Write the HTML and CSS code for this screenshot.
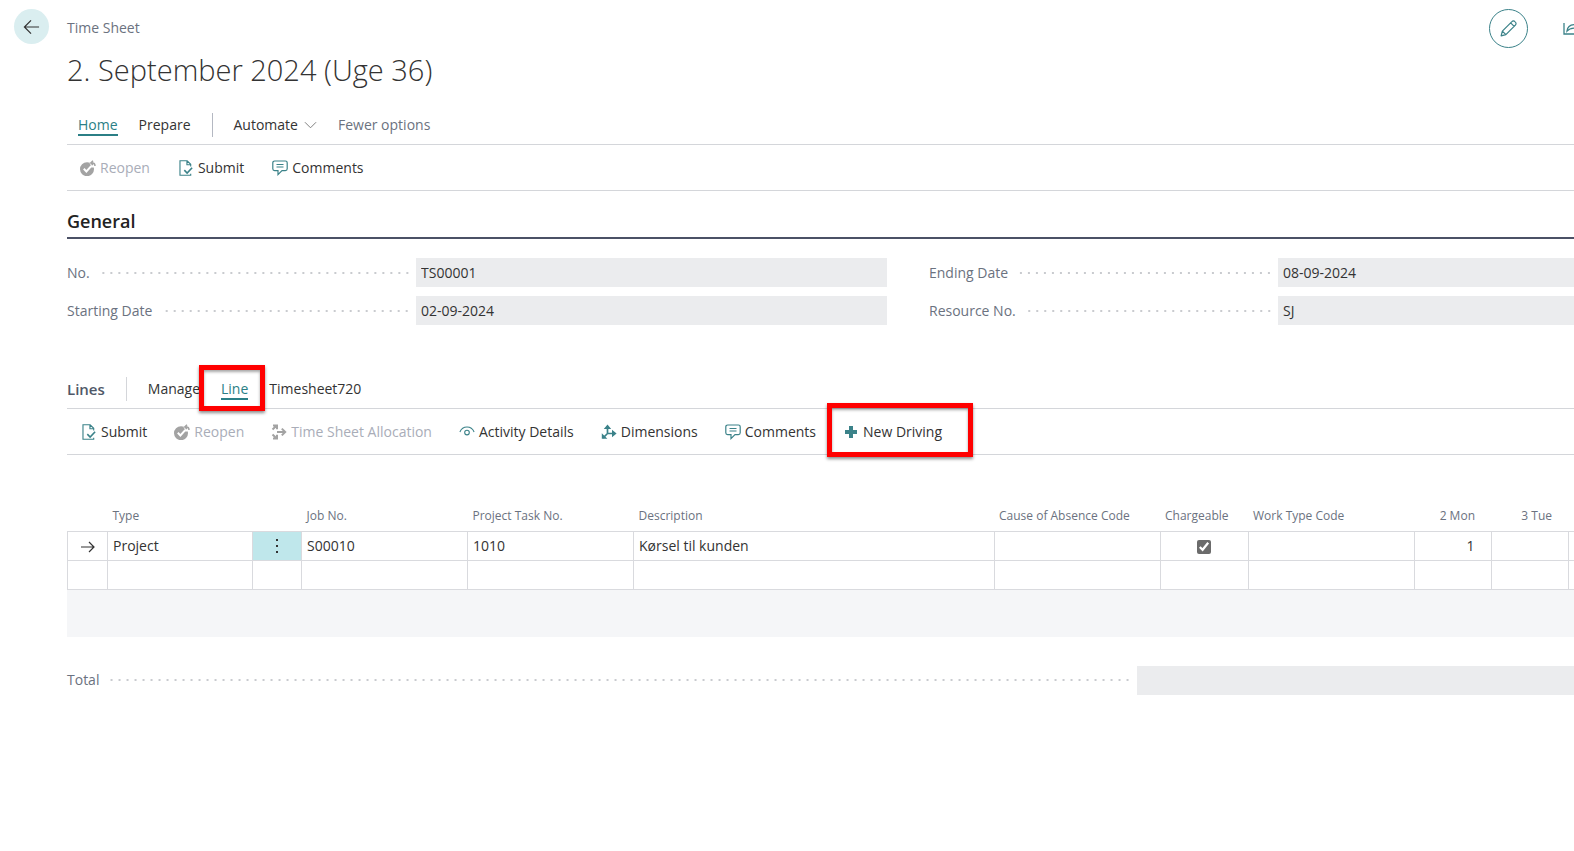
FILE: index.html
```html
<!DOCTYPE html>
<html lang="en">
<head>
<meta charset="utf-8">
<title>Time Sheet</title>
<link rel="stylesheet" href="styles.css">
</head>
<body>
<svg class="defs" aria-hidden="true">
  <symbol id="i-reopen" viewBox="0 0 16 16">
    <path fill="currentColor" d="M7 2.200A7 7 0 1 0 14 9l-.2-1.400h-2.600V5.400L9.600 3.600 10 2.800A7 7 0 0 0 7 2.200z"/>
    <path fill="none" stroke="#fff" stroke-width="2" d="M3.800 8.800l2.600 2.700 5-5.600"/>
    <path fill="none" stroke="currentColor" stroke-width="1.500" d="M13 .8l-2.200 2.100L13 5M11 2.900h1.600c1.600 0 2.400 1 2.400 3.100"/>
  </symbol>
  <symbol id="i-submit" viewBox="0 0 16 17">
    <path fill="none" stroke="currentColor" stroke-width="1.200" d="M13 7V4.600L9.200.8H1.600V16.200H13V14.500M9 .8V5h4"/>
    <path fill="none" stroke="currentColor" stroke-width="1.700" d="M6.200 10.800l3 3 5.300-5.600"/>
  </symbol>
  <symbol id="i-comments" viewBox="0 0 16 16">
    <path fill="none" stroke="currentColor" stroke-width="1.200" d="M2.600 1h10.800a1.800 1.800 0 0 1 1.800 1.800v6a1.800 1.800 0 0 1-1.800 1.800H10l-4 4v-4H2.600A1.800 1.800 0 0 1 .8 8.800v-6A1.800 1.800 0 0 1 2.600 1zM4.500 4.500h7M4.500 7h7"/>
  </symbol>
  <symbol id="i-alloc" viewBox="0 0 16 16">
    <path fill="none" stroke="currentColor" stroke-width="2" d="M1.500 5.500L5.500 1.800M2 1.400h4v3.800M1.500 10.500l4 3.800M2 14.600h4v-3.800M6 8h8M10.800 4.600L14.200 8l-3.400 3.400"/>
  </symbol>
  <symbol id="i-eye" viewBox="0 0 18 16">
    <path fill="none" stroke="currentColor" stroke-width="1.200" d="M1 8C2.600 4.200 5.600 2.400 9 2.400S15.400 4.200 17 8"/>
    <circle cx="9" cy="8.600" r="2.600" fill="none" stroke="currentColor" stroke-width="1.200"/>
  </symbol>
  <symbol id="i-dims" viewBox="0 0 16 16">
    <path fill="none" stroke="currentColor" stroke-width="1.700" d="M6.500 2v7.500H13M6.500 9.500L2 14"/>
    <path fill="currentColor" d="M2.800 5L6.500.6 10.200 5zM11 5.800l4.600 3.700-4.600 3.700zM.8 9.200v5.600h5.600z"/>
  </symbol>
  <symbol id="i-plus" viewBox="0 0 16 16">
    <path fill="currentColor" d="M6 2h4v4h4v4h-4v4H6v-4H2V6h4z"/>
  </symbol>
</svg>

<header class="top">
  <button class="back" type="button" aria-label="Back">
    <svg class="back-icon" viewBox="0 0 18 16"><path fill="none" stroke="currentColor" stroke-width="1.300" d="M17 8H1.500M8.500 1L1.500 8l7 7"/></svg>
  </button>
  <div class="heading">
    <p class="kind">Time Sheet</p>
    <h1 class="title">2. September 2024 (Uge 36)</h1>
  </div>
  <button class="edit" type="button" aria-label="Edit">
    <svg class="edit-icon" viewBox="0 0 18 18"><path fill="none" stroke="currentColor" stroke-width="1.300" stroke-linejoin="round" d="M1.200 16.800l1.300-5L12.600 1.700a2.200 2.200 0 0 1 3.200 0l.5.500a2.200 2.200 0 0 1 0 3.200L6.200 15.500zM2.500 11.800l3.700 3.700M11.300 3l3.700 3.700"/></svg>
  </button>
  <button class="share" type="button" aria-label="Share">
    <svg class="share-icon" viewBox="0 0 20 16"><path fill="none" stroke="currentColor" stroke-width="1.300" d="M1 3v11h15V11M4 11c.4-4 3-6.400 8-6.400V1.500L18 6.500l-6 4.700V8C8.500 8 6 8.800 4 11z"/></svg>
  </button>
</header>

<main class="page">
  <nav class="tabs" aria-label="Page actions">
    <button class="tab active" type="button">Home</button>
    <button class="tab" type="button">Prepare</button>
    <span class="divider"></span>
    <button class="tab" type="button">Automate<svg class="chevron" viewBox="0 0 14 8"><path fill="none" stroke="currentColor" d="M1 1l6 6 6-6"/></svg></button>
    <button class="tab muted" type="button">Fewer options</button>
  </nav>
  <div class="actions">
    <button class="action" type="button" disabled><svg class="icon"><use href="#i-reopen"/></svg>Reopen</button>
    <button class="action" type="button"><svg class="icon"><use href="#i-submit"/></svg>Submit</button>
    <button class="action" type="button"><svg class="icon"><use href="#i-comments"/></svg>Comments</button>
  </div>

  <section>
    <h2 class="section-title">General</h2>
    <div class="fields">
      <div class="field"><label class="label" for="no">No.</label><input class="value" id="no" value="TS00001" readonly></div>
      <div class="field"><label class="label" for="end">Ending Date</label><input class="value" id="end" value="08-09-2024" readonly></div>
      <div class="field"><label class="label" for="start">Starting Date</label><input class="value" id="start" value="02-09-2024" readonly></div>
      <div class="field"><label class="label" for="res">Resource No.</label><input class="value" id="res" value="SJ" readonly></div>
    </div>
  </section>

  <section class="lines">
    <div class="tabs line-tabs">
      <h2 class="lines-title">Lines</h2>
      <span class="divider pale"></span>
      <button class="tab" type="button">Manage</button>
      <button class="tab active marked" type="button">Line<span class="mark"></span></button>
      <button class="tab" type="button">Timesheet720</button>
    </div>
    <div class="actions line-actions">
      <button class="action" type="button"><svg class="icon"><use href="#i-submit"/></svg>Submit</button>
      <button class="action" type="button" disabled><svg class="icon"><use href="#i-reopen"/></svg>Reopen</button>
      <button class="action" type="button" disabled><svg class="icon"><use href="#i-alloc"/></svg>Time Sheet Allocation</button>
      <button class="action" type="button"><svg class="icon"><use href="#i-eye"/></svg>Activity Details</button>
      <button class="action" type="button"><svg class="icon"><use href="#i-dims"/></svg>Dimensions</button>
      <button class="action" type="button"><svg class="icon"><use href="#i-comments"/></svg>Comments</button>
      <button class="action marked" type="button"><svg class="icon"><use href="#i-plus"/></svg>New Driving<span class="mark wide"></span></button>
    </div>

    <div class="grid-area">
      <table class="grid">
        <colgroup><col class="c-sel"><col class="c-type"><col class="c-menu"><col class="c-code"><col class="c-code"><col><col class="c-code"><col class="c-check"><col class="c-code"><col class="c-day"><col class="c-day"><col class="c-edge"></colgroup>
        <thead>
          <tr><th></th><th>Type</th><th></th><th>Job No.</th><th>Project Task No.</th><th>Description</th><th>Cause of Absence Code</th><th>Chargeable</th><th>Work Type Code</th><th class="num">2 Mon</th><th class="num">3 Tue</th><th></th></tr>
        </thead>
        <tbody>
          <tr>
            <td class="center"><svg class="row-arrow" viewBox="0 0 14 12"><path fill="none" stroke="currentColor" stroke-width="1.200" d="M0 6h13M8 1l5 5-5 5"/></svg></td>
            <td>Project</td>
            <td class="center menu-cell"><button class="menu" type="button" aria-label="Row options"><svg class="dots" viewBox="0 0 4 16"><path fill="currentColor" d="M1 1h2v2H1zM1 7h2v2H1zM1 13h2v2H1z"/></svg></button></td>
            <td>S00010</td><td>1010</td><td>Kørsel til kunden</td><td></td>
            <td class="center"><input class="check" type="checkbox" aria-label="Chargeable" checked></td>
            <td></td><td class="num">1</td><td></td><td></td>
          </tr>
          <tr><td></td><td></td><td></td><td></td><td></td><td></td><td></td><td></td><td></td><td></td><td></td><td></td></tr>
        </tbody>
      </table>
    </div>

    <div class="field total"><label class="label" for="total">Total</label><input class="value" id="total" readonly></div>
  </section>
</main>
</body>
</html>
```
FILE: styles.css
```css
* { box-sizing: border-box; }

body {
  margin: 0;
  background: #fff;
  color: #333;
  font: 14px/20px "Open Sans", "Noto Sans", sans-serif;
  overflow-x: hidden;
}

button {
  display: inline-flex;
  align-items: center;
  padding: 0;
  border: 0;
  background: none;
  color: inherit;
  font: inherit;
  white-space: nowrap;
}

.defs { display: none; }

.top {
  display: flex;
  align-items: flex-start;
  padding: 9px 0 0 14px;
  height: 106px;
  overflow: hidden;
}

.back {
  width: 35px;
  height: 35px;
  justify-content: center;
  border-radius: 50%;
  background: #daeef0;
}

.back-icon { width: 17px; height: 16px; }

.heading {
  flex: 1;
  padding: 9px 0 0 18px;
}

.kind { margin: 0; color: #6b7280; }

.title {
  margin: 12px 0 0;
  font-size: 29px;
  line-height: 40px;
  font-weight: 300;
}

.edit {
  width: 39px;
  height: 39px;
  justify-content: center;
  border: 1px solid #3b8289;
  border-radius: 50%;
  color: #3b8289;
}

.edit-icon { width: 17px; height: 17px; }

.share {
  width: 11px;
  margin: 11px 0 0 35px;
  color: #3b8289;
}

.share-icon { flex: none; width: 20px; height: 16px; }

.page { padding-left: 67px; }

.tabs {
  display: flex;
  align-items: center;
  gap: 21px;
  height: 39px;
  padding-left: 11px;
  border-bottom: 1px solid #d4d6da;
}

.tab { height: 22px; padding-top: 2px; border-bottom: 2px solid transparent; }
.tab.active { color: #2b7f86; border-color: #2b7f86; }
.tab.muted { color: #6b7280; }

.chevron { width: 13px; height: 8px; margin-left: 6px; color: #777; }

.divider { width: 1px; height: 24px; background: #b4b8c2; }
.divider.pale { background: #d4d6da; }

.actions {
  display: flex;
  align-items: center;
  gap: 28px;
  height: 46px;
  padding-left: 13px;
  border-bottom: 1px solid #d4d6da;
}

.line-actions { gap: 27px; padding-left: 14px; }

.action { gap: 4px; }
.action:disabled { color: #a9adb8; }
.action:disabled .icon { color: #a3a3a3; }

.icon { width: 16px; height: 16px; color: #3b8289; }

.section-title {
  margin: 0;
  padding: 18px 0 4px;
  border-bottom: 2px solid #4b5166;
  color: #222;
  font-size: 18px;
  line-height: 24px;
  font-weight: 600;
}

.fields {
  display: grid;
  grid-template-columns: 820fr 645fr;
  gap: 9px 42px;
  padding-top: 19px;
}

.field { display: flex; align-items: center; }

.label {
  display: flex;
  flex: none;
  align-items: center;
  gap: 8px;
  width: 349px;
  padding-right: 6px;
  color: #6b7280;
}

.label::after {
  content: "";
  flex: 1;
  height: 2px;
  background: radial-gradient(circle at 5px 1px, #c9cbcf 1px, transparent 1px) right / 8px 2px repeat-x;
}

.value {
  flex: 1;
  min-width: 0;
  height: 29px;
  padding: 0 5px;
  border: 0;
  background: #ebecee;
  color: #333;
  font: inherit;
}

.lines { padding-top: 45px; }

.line-tabs { padding-left: 0; }

.lines-title {
  margin: 0;
  color: #505868;
  font-size: 15px;
  line-height: 20px;
  font-weight: 600;
}

.marked { position: relative; }

.mark {
  position: absolute;
  top: -13px;
  left: -22px;
  width: 66px;
  height: 46px;
  border: 5px solid #f00;
  box-shadow: 0 2px 3px rgba(0, 0, 0, .45), inset 0 2px 3px rgba(0, 0, 0, .35);
}

.mark.wide {
  top: -19px;
  left: -16px;
  width: 146px;
  height: 54px;
}

.grid-area {
  margin-top: 50px;
  padding-bottom: 47px;
  background: linear-gradient(#fff, #fff) top / 100% 28px no-repeat #f5f6f8;
}

.grid {
  width: 100%;
  table-layout: fixed;
  border-collapse: collapse;
  background: #fff;
}

.c-sel { width: 40px; }
.c-type { width: 145px; }
.c-menu { width: 49px; }
.c-code { width: 166px; }
.c-check { width: 88px; }
.c-day { width: 77px; }
.c-edge { width: 6px; }

.grid th, .grid td {
  padding: 0 5px;
  text-align: left;
  white-space: nowrap;
}

.grid th {
  height: 26px;
  padding-bottom: 4px;
  color: #6b7280;
  font-size: 12px;
  line-height: 16px;
  font-weight: 400;
}

.grid td { height: 29px; border: 1px solid #d9dade; }
.grid td:last-child { border-right: 0; }

.grid .num { padding-right: 16px; text-align: right; }
.grid .center { text-align: center; }
.grid .menu-cell { background: #bfe7eb; }

.row-arrow { width: 14px; height: 12px; vertical-align: middle; }
.menu { height: 20px; vertical-align: middle; }
.dots { width: 4px; height: 16px; }

.check {
  width: 14px;
  height: 14px;
  margin: 0;
  vertical-align: middle;
  accent-color: #6b6b6b;
}

.total { margin-top: 29px; }
.total .label { width: 71%; }
```
